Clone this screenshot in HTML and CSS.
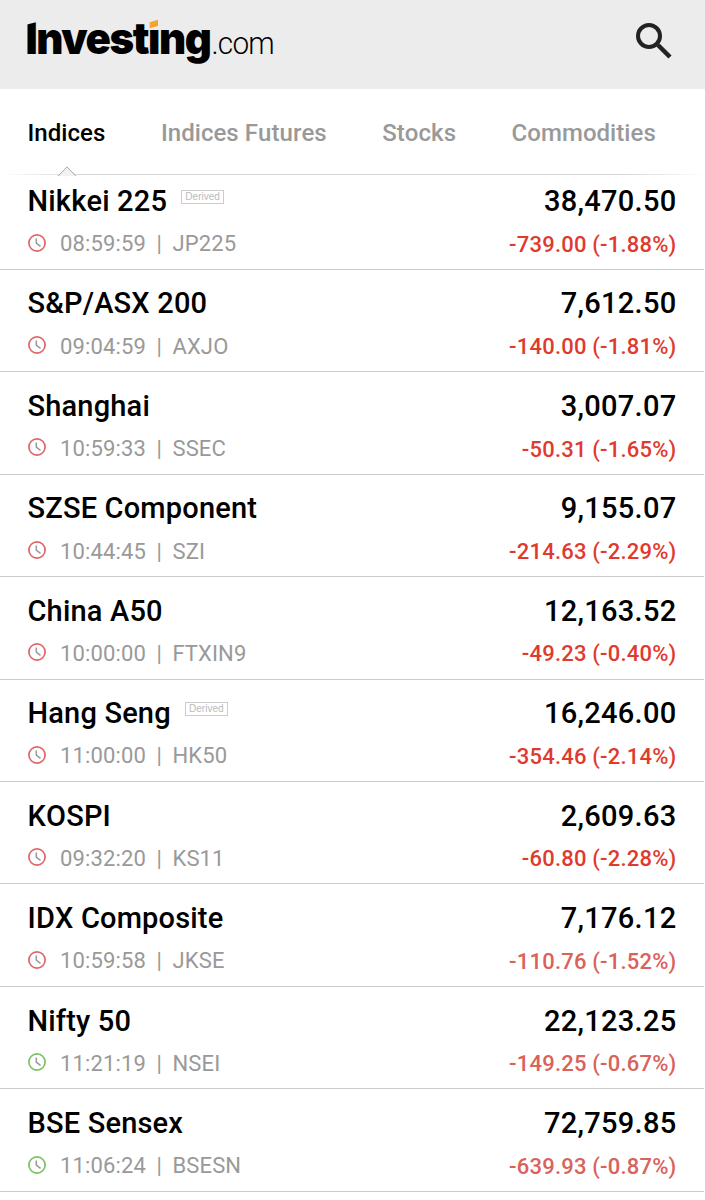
FILE: index.html
```html
<!DOCTYPE html>
<html lang="en">
<head>
    <meta charset="UTF-8">
    <meta name="viewport" content="width=device-width, initial-scale=1.0">
    <title>Investing.com - Indices</title>
    <link rel="stylesheet" href="styles.css">
</head>
<body>
    <svg class="sprite" width="0" height="0">
        <symbol id="clock" viewBox="0 0 20 20">
            <circle cx="10" cy="10" r="8.1" fill="none" stroke="currentColor" stroke-width="1.7"/>
            <path d="M9.3 5.4v4.7l4.2 3.2" fill="none" stroke="#999" stroke-width="1.5"/>
        </symbol>
    </svg>

    <header class="header">
        <svg class="logo" width="260" height="64" viewBox="-7 0 260 64" role="img" aria-label="Investing.com">
            <text class="logo-name" x="-1.5" y="44" textLength="185" lengthAdjust="spacingAndGlyphs">Investing</text>
            <text class="logo-tld" x="184.5" y="44" textLength="62.5" lengthAdjust="spacingAndGlyphs">.com</text>
            <!-- slanted tops and the orange dot -->
            <path class="logo-cut" d="M-2 6h13v5.8L-2 15z"/>
            <path class="logo-cut" d="M119.5 6h15v11.500l-15 2z"/>
            <path class="logo-dot" d="M122.700 12.200l8.300-2.400v6.200l-8.300 2.300z"/>
        </svg>
        <svg class="search" width="44" height="44" viewBox="0 0 44 44" aria-label="Search">
            <circle cx="18" cy="18" r="11" fill="none" stroke="#222" stroke-width="4"/>
            <path d="M27 27l12 12" stroke="#222" stroke-width="4.500"/>
        </svg>
    </header>

    <nav class="tabs">
        <a class="tab active">Indices</a>
        <a class="tab">Indices Futures</a>
        <a class="tab">Stocks</a>
        <a class="tab">Commodities</a>
    </nav>

    <main class="quotes" id="quotes"></main>

    <script src="quotes.js"></script>
</body>
</html>
```
FILE: quotes.js
```js
const quotes = [
    { name: 'Nikkei 225', derived: true, time: '08:59:59', symbol: 'JP225', price: '38,470.50', change: '-739.00 (-1.88%)' },
    { name: 'S&P/ASX 200', time: '09:04:59', symbol: 'AXJO', price: '7,612.50', change: '-140.00 (-1.81%)' },
    { name: 'Shanghai', time: '10:59:33', symbol: 'SSEC', price: '3,007.07', change: '-50.31 (-1.65%)' },
    { name: 'SZSE Component', time: '10:44:45', symbol: 'SZI', price: '9,155.07', change: '-214.63 (-2.29%)' },
    { name: 'China A50', time: '10:00:00', symbol: 'FTXIN9', price: '12,163.52', change: '-49.23 (-0.40%)' },
    { name: 'Hang Seng', derived: true, time: '11:00:00', symbol: 'HK50', price: '16,246.00', change: '-354.46 (-2.14%)' },
    { name: 'KOSPI', time: '09:32:20', symbol: 'KS11', price: '2,609.63', change: '-60.80 (-2.28%)' },
    { name: 'IDX Composite', time: '10:59:58', symbol: 'JKSE', price: '7,176.12', change: '-110.76 (-1.52%)', faded: true },
    { name: 'Nifty 50', time: '11:21:19', symbol: 'NSEI', price: '22,123.25', change: '-149.25 (-0.67%)', faded: true, open: true },
    { name: 'BSE Sensex', time: '11:06:24', symbol: 'BSESN', price: '72,759.85', change: '-639.93 (-0.87%)', faded: true, open: true }
];

document.getElementById('quotes').innerHTML = quotes.map(q => `
    <div class="quote">
        <div class="top">
            <span class="name">${q.name.replace('&', '&amp;')}</span>
            ${q.derived ? '<span class="derived">Derived</span>' : ''}
            <span class="price">${q.price}</span>
        </div>
        <div class="bottom">
            <svg class="clock ${q.open ? 'open' : ''}"><use href="#clock"/></svg>
            <span class="time">${q.time}</span>
            <span class="sep">|</span>
            <span class="symbol">${q.symbol}</span>
            <span class="change ${q.faded ? 'faded' : ''}">${q.change}</span>
        </div>
    </div>
`).join('');
```
FILE: styles.css
```css
* {
    box-sizing: border-box;
}

body {
    margin: 0;
    height: 1200px;
    overflow: hidden;
    background: #fff;
    color: #000;
    font-family: Roboto, sans-serif;
    font-kerning: none;
}

.sprite {
    display: block;
}

.header {
    height: 89px;
    padding: 10px 30.5px 0 20px;
    display: flex;
    justify-content: space-between;
    background: #ececec;
}

.logo-name {
    font: 900 44px Inter, sans-serif;
    letter-spacing: -1.5px;
}

.logo-tld {
    font: 300 31.5px Roboto, sans-serif;
    letter-spacing: -0.8px;
}

.logo-cut {
    fill: #ececec;
}

.logo-dot {
    fill: #f2a433;
}

.search {
    margin-top: 8px;
}

.tabs {
    height: 86px;
    padding: 29px 27.5px 0;
    display: flex;
    gap: 55.5px;
    background: linear-gradient(90deg, #fff, #d4d4d4 12%, #d4d4d4 88%, #fff) bottom / 100% 1px no-repeat;
}

.tab {
    position: relative;
    font-size: 24px;
    font-weight: 500;
    line-height: 30px;
    letter-spacing: 0.05px;
    color: #999;
    white-space: nowrap;
}

.tab.active {
    color: #000;
}

.tab.active::after {
    content: "";
    position: absolute;
    left: 32px;
    top: 51px;
    width: 13px;
    height: 13px;
    border: 1px solid #aaa;
    border-width: 1px 0 0 1px;
    transform: rotate(45deg);
    background: linear-gradient(135deg, #f2f2f2 50%, #fff 50%);
    clip-path: polygon(0 0, 100% 0, 0 100%);
}

.quotes {
    width: 704px;
    margin-top: -7.6px;
}

.quote {
    height: 102.44px;
    padding: 14.6px 27.5px 0 27.5px;
    border-bottom: 1px solid #ccc;
}

.top {
    display: flex;
    height: 38px;
    line-height: 38px;
    font-size: 29px;
    font-weight: 500;
}

.name {
    letter-spacing: 0.18px;
}

.derived {
    width: 43px;
    height: 14px;
    margin: 8px 0 0 14px;
    border: 1px solid #ccc;
    font: 10px/12px "Liberation Sans", sans-serif;
    color: #bbb;
    text-align: center;
}

.price {
    margin-left: auto;
    letter-spacing: 0.3px;
}

.bottom {
    display: flex;
    height: 30px;
    margin-top: 9.3px;
    line-height: 30px;
    font-size: 22px;
    color: #999;
}

.clock {
    width: 20px;
    height: 20px;
    margin: 3.3px 13px 0 -0.5px;
    color: #e0666a;
}

.clock.open {
    color: #7cc161;
}

.time,
.symbol {
    letter-spacing: 0.15px;
}

.sep {
    margin: 0 10.5px 0 10.5px;
}

.change {
    margin-left: auto;
    padding-top: 0.4px;
    font-weight: 500;
    letter-spacing: 0.2px;
    color: #e03a2e;
}

.change.faded {
    color: #d9625a;
}
```
